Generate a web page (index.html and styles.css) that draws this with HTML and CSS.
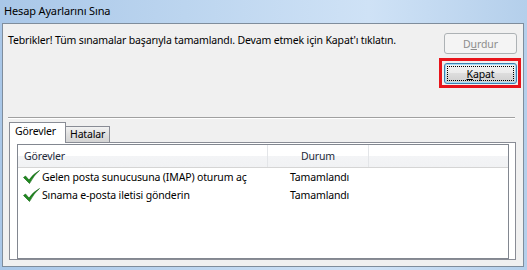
FILE: index.html
```html
<!DOCTYPE html>
<html lang="tr">

<head>
    <meta charset="UTF-8">
    <title>Hesap Ayarlarını Sına</title>
    <link rel="stylesheet" href="styles.css">
</head>

<body>
    <div class="window">
        <div class="titlebar">Hesap Ayarlarını Sına</div>
        <div class="dialog">
            <div class="head">
                <p class="msg">Tebrikler! Tüm sınamalar başarıyla tamamlandı. Devam etmek için Kapat'ı tıklatın.</p>
                <div class="actions">
                    <button class="btn" disabled>D<u>u</u>rdur</button>
                    <div class="mark">
                        <button class="btn default"><u>K</u>apat</button>
                    </div>
                </div>
            </div>
            <div class="sep"></div>
            <div class="tabs">
                <div class="tab active">Görevler</div>
                <div class="tab">Hatalar</div>
            </div>
            <div class="panel">
                <div class="list">
                    <div class="list-head">
                        <div class="col c1">Görevler</div>
                        <div class="col c2">Durum</div>
                        <div class="col c3"></div>
                    </div>
                    <div class="row">
                        <div class="c1 task">
                            <svg class="check" width="17" height="14" viewBox="0 0 17 14">
                                <path d="M0.5 7.5 L2.5 6 L6 10 Q10 4 16.5 0.5 Q11 5 6.5 13.5 Z" fill="#1f8a1f" stroke="#0d5e0d" stroke-width="0.6" />
                            </svg>
                            Gelen posta sunucusuna (IMAP) oturum aç
                        </div>
                        <div class="c2 state">Tamamlandı</div>
                    </div>
                    <div class="row">
                        <div class="c1 task">
                            <svg class="check" width="17" height="14" viewBox="0 0 17 14">
                                <path d="M0.5 7.5 L2.5 6 L6 10 Q10 4 16.5 0.5 Q11 5 6.5 13.5 Z" fill="#1f8a1f" stroke="#0d5e0d" stroke-width="0.6" />
                            </svg>
                            Sınama e-posta iletisi gönderin
                        </div>
                        <div class="c2 state">Tamamlandı</div>
                    </div>
                </div>
            </div>
        </div>
    </div>
</body>

</html>
```

FILE: styles.css
```css
body {
    margin: 0;
    font-family: "Noto Sans", "Open Sans", sans-serif;
    font-size: 10.5px;
    letter-spacing: -0.15px;
    color: #000;
}

.window {
    width: 527px;
    height: 270px;
    display: flex;
    flex-direction: column;
    background: linear-gradient(90deg, #a9c7e8 0%, #bcd5ef 35%, #cfe2f6 70%, #b4cfeb 100%);
}

.titlebar {
    height: 23px;
    padding-left: 4px;
    line-height: 21px;
    font-size: 11px;
}

.dialog {
    flex: 1;
    margin: 0 3px 3px 2px;
    border: 1px solid #7f8d9c;
    background: #f0f0f0;
    display: flex;
    flex-direction: column;
}

.head {
    height: 93px;
    box-sizing: border-box;
    display: flex;
    justify-content: space-between;
    padding: 9px 6px 0 5px;
}

.msg {
    margin: 0;
    line-height: 15px;
}

.actions {
    display: flex;
    flex-direction: column;
    width: 73px;
}

.mark {
    margin: 4px -4px 0 -5px;
    padding: 2px 1px 1px 2px;
    border: 3px solid #e8141b;
}

.btn {
    position: relative;
    display: block;
    height: 21px;
    width: 73px;
    padding: 0;
    font-family: inherit;
    font-size: 10.5px;
    letter-spacing: -0.1px;
    color: #000;
    border: 1px solid #707070;
    border-radius: 3px;
    background: linear-gradient(#f2f2f2 0%, #ebebeb 49%, #dddddd 50%, #cfcfcf 100%);
}

.btn[disabled] {
    color: #8d8d8d;
    border-color: #adb2b5;
    background: #f4f4f4;
}

.btn.default {
    border-color: #3c7fb1;
    box-shadow: inset 0 0 0 1px #a3dcf7;
}

.btn.default::after {
    content: "";
    position: absolute;
    inset: 2px;
    border: 1px dotted #000;
}

.sep {
    margin: 0 8px 0 5px;
    border-top: 1px solid #a0a0a0;
    border-bottom: 1px solid #fff;
}

.tabs {
    display: flex;
    align-items: flex-end;
    height: 19px;
    margin: 4px 0 0 6px;
}

.tab {
    height: 15px;
    line-height: 15px;
    padding: 0 4px 0 4px;
    border: 1px solid #898c95;
    border-bottom: none;
    background: linear-gradient(#f2f2f2, #e0e0e0 50%, #d4d4d4);
    margin-left: -1px;
}

.tab.active {
    position: relative;
    z-index: 1;
    box-sizing: border-box;
    height: 21px;
    margin-bottom: -1px;
    margin-left: 0;
    line-height: 17px;
    width: 57px;
    padding: 0 0 0 5px;
    background: #fff;
}

.panel {
    flex: 1;
    display: flex;
    margin: 0 7px 6px 6px;
    padding: 1px 6px 0 7px;
    border: 1px solid #898c95;
    background: #fff;
}

.list {
    flex: 1;
    border: 1px solid #828790;
    background: #fff;
}

.list-head {
    display: flex;
    height: 22px;
    border-bottom: 1px solid #d5d5d5;
    background: linear-gradient(#ffffff 0%, #ffffff 50%, #f3f4f6 51%, #f1f2f4 100%);
    color: #1e2a3a;
}

.col {
    line-height: 22px;
    box-sizing: border-box;
    border-right: 1px solid #e3e5e8;
}

.c1 {
    width: 250px;
    box-sizing: border-box;
    padding-left: 6px;
}

.c2 {
    width: 101px;
    box-sizing: border-box;
}

.list-head .c2 {
    text-align: center;
}

.list-head .c3 {
    flex: 1;
    border-right: none;
}

.row {
    display: flex;
    height: 18px;
    line-height: 18px;
}

.task {
    display: flex;
    align-items: center;
    gap: 2px;
    padding-left: 5px;
    white-space: nowrap;
}

.check {
    flex: none;
}

.state {
    padding-left: 22px;
}
```
